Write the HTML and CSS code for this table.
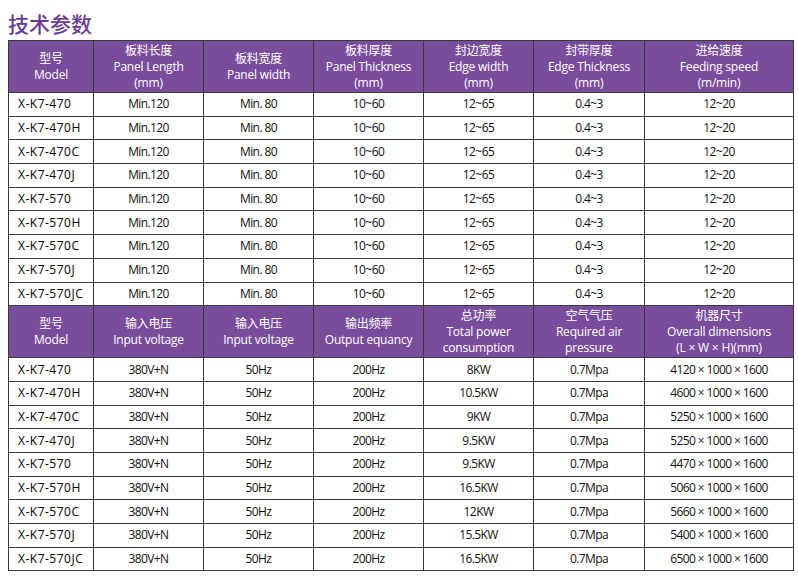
FILE: index.html
```html
<!DOCTYPE html>
<html lang="zh">
<head>
<meta charset="utf-8">
<link rel="stylesheet" href="styles.css">
</head>
<body>
<h1 class="title">技术参数</h1>
<table class="spec">
<colgroup>
<col class="c1"><col class="c2"><col class="c3"><col class="c4"><col class="c5"><col class="c6"><col class="c7">
</colgroup>
<tbody>
<tr class="head">
<th>型号<br>Model</th>
<th>板料长度<br>Panel Length<br>(mm)</th>
<th>板料宽度<br>Panel width</th>
<th>板料厚度<br>Panel Thickness<br>(mm)</th>
<th>封边宽度<br>Edge width<br>(mm)</th>
<th>封带厚度<br>Edge Thickness<br>(mm)</th>
<th>进给速度<br>Feeding speed<br>(m/min)</th>
</tr>
<tr><td class="m">X-K7-470</td><td>Min.120</td><td>Min. 80</td><td>10~60</td><td>12~65</td><td>0.4~3</td><td>12~20</td></tr>
<tr><td class="m">X-K7-470H</td><td>Min.120</td><td>Min. 80</td><td>10~60</td><td>12~65</td><td>0.4~3</td><td>12~20</td></tr>
<tr><td class="m">X-K7-470C</td><td>Min.120</td><td>Min. 80</td><td>10~60</td><td>12~65</td><td>0.4~3</td><td>12~20</td></tr>
<tr><td class="m">X-K7-470J</td><td>Min.120</td><td>Min. 80</td><td>10~60</td><td>12~65</td><td>0.4~3</td><td>12~20</td></tr>
<tr><td class="m">X-K7-570</td><td>Min.120</td><td>Min. 80</td><td>10~60</td><td>12~65</td><td>0.4~3</td><td>12~20</td></tr>
<tr><td class="m">X-K7-570H</td><td>Min.120</td><td>Min. 80</td><td>10~60</td><td>12~65</td><td>0.4~3</td><td>12~20</td></tr>
<tr><td class="m">X-K7-570C</td><td>Min.120</td><td>Min. 80</td><td>10~60</td><td>12~65</td><td>0.4~3</td><td>12~20</td></tr>
<tr><td class="m">X-K7-570J</td><td>Min.120</td><td>Min. 80</td><td>10~60</td><td>12~65</td><td>0.4~3</td><td>12~20</td></tr>
<tr><td class="m">X-K7-570JC</td><td>Min.120</td><td>Min. 80</td><td>10~60</td><td>12~65</td><td>0.4~3</td><td>12~20</td></tr>
<tr class="head">
<th>型号<br>Model</th>
<th>输入电压<br>Input voltage</th>
<th>输入电压<br>Input voltage</th>
<th>输出频率<br>Output equancy</th>
<th>总功率<br>Total power<br>consumption</th>
<th>空气气压<br>Required air<br>pressure</th>
<th>机器尺寸<br>Overall dimensions<br>(L × W × H)(mm)</th>
</tr>
<tr><td class="m">X-K7-470</td><td>380V+N</td><td>50Hz</td><td>200Hz</td><td>8KW</td><td>0.7Mpa</td><td>4120 × 1000 × 1600</td></tr>
<tr><td class="m">X-K7-470H</td><td>380V+N</td><td>50Hz</td><td>200Hz</td><td>10.5KW</td><td>0.7Mpa</td><td>4600 × 1000 × 1600</td></tr>
<tr><td class="m">X-K7-470C</td><td>380V+N</td><td>50Hz</td><td>200Hz</td><td>9KW</td><td>0.7Mpa</td><td>5250 × 1000 × 1600</td></tr>
<tr><td class="m">X-K7-470J</td><td>380V+N</td><td>50Hz</td><td>200Hz</td><td>9.5KW</td><td>0.7Mpa</td><td>5250 × 1000 × 1600</td></tr>
<tr><td class="m">X-K7-570</td><td>380V+N</td><td>50Hz</td><td>200Hz</td><td>9.5KW</td><td>0.7Mpa</td><td>4470 × 1000 × 1600</td></tr>
<tr><td class="m">X-K7-570H</td><td>380V+N</td><td>50Hz</td><td>200Hz</td><td>16.5KW</td><td>0.7Mpa</td><td>5060 × 1000 × 1600</td></tr>
<tr><td class="m">X-K7-570C</td><td>380V+N</td><td>50Hz</td><td>200Hz</td><td>12KW</td><td>0.7Mpa</td><td>5660 × 1000 × 1600</td></tr>
<tr><td class="m">X-K7-570J</td><td>380V+N</td><td>50Hz</td><td>200Hz</td><td>15.5KW</td><td>0.7Mpa</td><td>5400 × 1000 × 1600</td></tr>
<tr><td class="m">X-K7-570JC</td><td>380V+N</td><td>50Hz</td><td>200Hz</td><td>16.5KW</td><td>0.7Mpa</td><td>6500 × 1000 × 1600</td></tr>
</tbody>
</table>
</body>
</html>
```
FILE: styles.css
```css
html, body {
  margin: 0;
  padding: 0;
  background: #ffffff;
}
body {
  font-family: "Open Sans", "Noto Sans", "Noto Sans CJK SC", sans-serif;
  color: #111;
}
.title {
  margin: 0;
  padding: 8px 0 0 8px;
  height: 32px;
  font-family: "Noto Sans CJK SC", sans-serif;
  font-size: 21px;
  line-height: 30px;
  font-weight: 500;
  color: #6a3d8f;
  letter-spacing: 0;
}
.spec {
  margin-left: 8px;
  width: 785px;
  border-collapse: collapse;
  table-layout: fixed;
  font-size: 12px;
}
.c1 { width: 85px; }
.c2 { width: 110px; }
.c3 { width: 110px; }
.c4 { width: 110px; }
.c5 { width: 110px; }
.c6 { width: 111px; }
.c7 { width: 149px; }
.spec th, .spec td {
  border: 1px solid #3a3a3a;
  padding: 0;
  text-align: center;
  vertical-align: middle;
}
.spec th {
  background: #7a4c9c;
  color: #fff;
  font-weight: 400;
  font-family: "Open Sans", "Noto Sans CJK SC", sans-serif;
  font-size: 12px;
  line-height: 16px;
  letter-spacing: -0.2px;
}
.head { height: 52px; }
.spec td {
  height: 22.7px;
  line-height: 14px;
  letter-spacing: -0.6px;
  color: #111;
}
.spec td.m {
  text-align: left;
  padding-left: 9px;
  letter-spacing: 0.5px;
  font-weight: 500;
  color: #000;
}
```
